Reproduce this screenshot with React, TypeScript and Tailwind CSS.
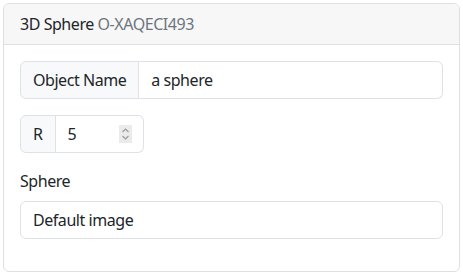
import React from "react";

export default function App() {
  return (
    <div className="p-[3px] bg-white text-[#212529] text-[16px] leading-6 tracking-[-0.45px]" style={{ fontFamily: '"Noto Sans", sans-serif' }}>
      <div className="border border-[#dfdfdf] rounded-[6px] overflow-hidden">
        <div className="bg-[#f7f7f7] border-b border-[#dfdfdf] px-4 py-2 h-[41px]">
          3D Sphere <span className="text-[#6c757d]">O-XAQECI493</span>
        </div>
        <div className="p-4">
          <div className="flex h-[38px] mb-4">
            <span className="flex items-center px-3 bg-[#f8f9fa] border border-[#dee2e6] rounded-l-[6px]">Object Name</span>
            <div className="flex-1 flex items-center px-3 border border-l-0 border-[#dee2e6] rounded-r-[6px]">a sphere</div>
          </div>
          <div className="flex h-[38px] w-[124px] mb-4">
            <span className="flex items-center px-3 bg-[#f8f9fa] border border-[#dee2e6] rounded-l-[6px]">R</span>
            <div className="flex-1 flex items-center justify-between pl-3 pr-[11px] border border-l-0 border-[#dee2e6] rounded-r-[6px]">
              <span>5</span>
              <span className="w-[13px] h-[18px] bg-[#ebebeb] flex items-center justify-center">
                <svg width="9" height="14" viewBox="0 0 9 14" fill="none" stroke="#9a9a9a" strokeWidth="1.2">
                  <path d="M1.5 5 L4.5 2 L7.5 5" />
                  <path d="M1.5 9 L4.5 12 L7.5 9" />
                </svg>
              </span>
            </div>
          </div>
          <div className="mb-2">Sphere</div>
          <div className="flex items-center h-[38px] px-3 border border-[#dee2e6] rounded-[6px] mb-4">Default image</div>
        </div>
      </div>
    </div>
  );
}
